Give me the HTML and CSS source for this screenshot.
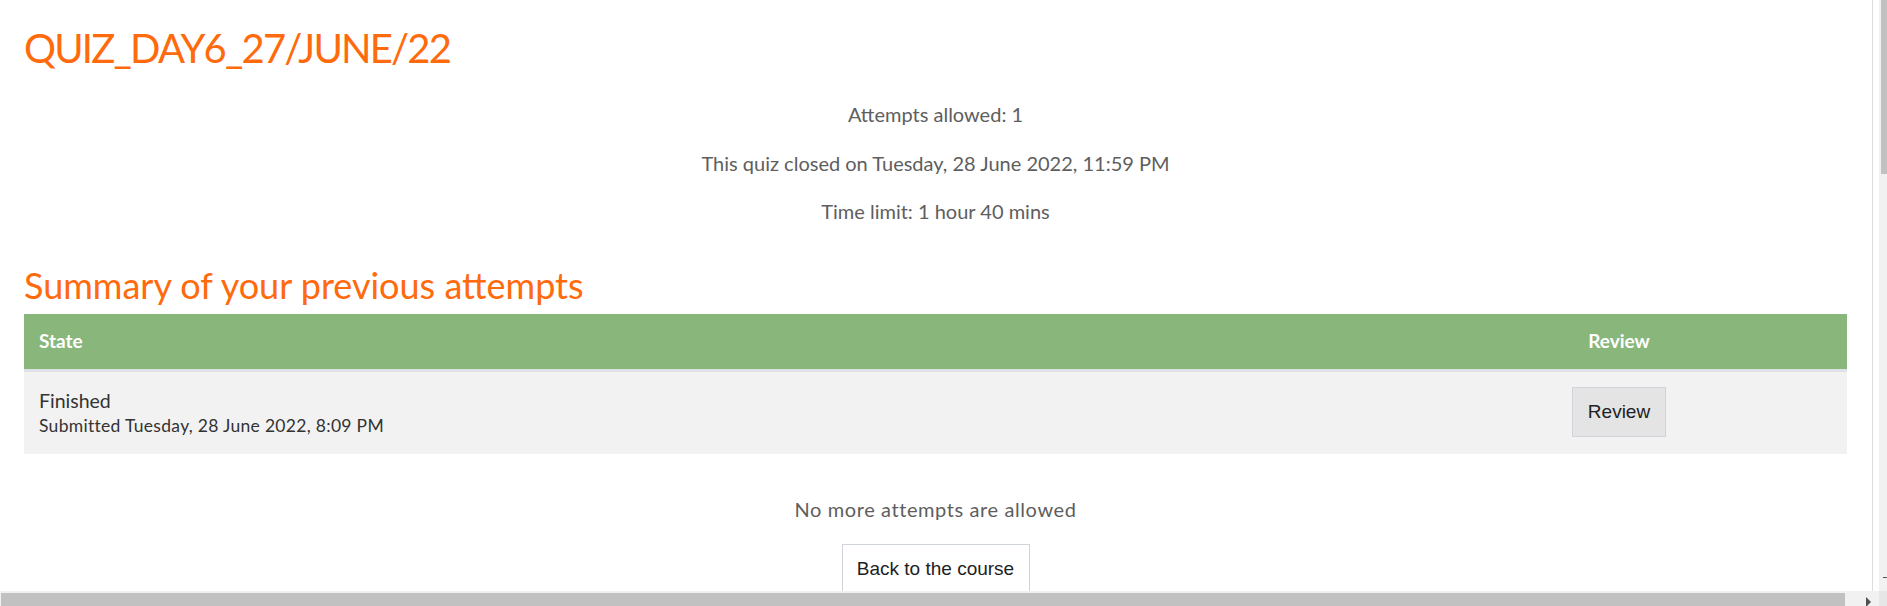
FILE: index.html
```html
<!DOCTYPE html>
<html lang="en">
<head>
<meta charset="utf-8">
<title>QUIZ_DAY6_27/JUNE/22</title>
<link rel="stylesheet" href="styles.css">
</head>
<body>
<div class="page">
  <main class="content">
    <h1 class="quiz-title">QUIZ_DAY6_27/JUNE/22</h1>
    <div class="quizinfo">
      <p>Attempts allowed: 1</p>
      <p>This quiz closed on Tuesday, 28 June 2022, 11:59 PM</p>
      <p>Time limit: 1 hour 40 mins</p>
    </div>
    <h3 class="summary-title">Summary of your previous attempts</h3>
    <div class="attempts">
      <div class="attempts-head">
        <div class="cell cell-state">State</div>
        <div class="cell cell-review">Review</div>
      </div>
      <div class="attempts-row">
        <div class="cell cell-state">
          <div class="state-name">Finished</div>
          <div class="state-date">Submitted Tuesday, 28 June 2022, 8:09 PM</div>
        </div>
        <div class="cell cell-review">
          <button class="btn btn-review" type="button">Review</button>
        </div>
      </div>
    </div>
    <div class="quizattempt">
      <p class="no-more">No more attempts are allowed</p>
      <button class="btn btn-back" type="button">Back to the course</button>
    </div>
  </main>
  <div class="drawer-edge"></div>
</div>
<div class="vscroll"><div class="vthumb"></div><div class="varrow"></div></div>
<div class="hscroll"><div class="hthumb"></div><div class="harrow"></div></div>
<div class="scorner"></div>
</body>
</html>
```

FILE: styles.css
```css
html, body {
  margin: 0;
  padding: 0;
  background: #ffffff;
  overflow: hidden;
  height: 606px;
}

body {
  font-family: "Lato", "Open Sans", sans-serif;
  color: #333333;
}

.page {
  position: relative;
  width: 1887px;
  height: 606px;
}

.content {
  width: 1823px;
  padding: 0 40px 0 24px;
}

.quiz-title {
  margin: 0;
  padding-top: 24px;
  font-size: 40px;
  line-height: 48px;
  font-weight: 400;
  letter-spacing: -1.8px;
  color: #ff6a0c;
}

.quizinfo {
  margin-top: 28px;
  text-align: center;
  color: #5e5e5e;
  font-size: 20px;
}

.quizinfo p {
  margin: 0 0 20.5px;
  line-height: 28px;
}

.quizinfo p:last-child {
  margin-bottom: 0;
}

.summary-title {
  margin: 40px 0 0;
  font-size: 36px;
  line-height: 40px;
  font-weight: 400;
  color: #ff6a0c;
}

.attempts {
  margin-top: 9px;
}

.attempts-head,
.attempts-row {
  display: grid;
  grid-template-columns: 1fr 456px;
}

.attempts-head {
  background: #88b67b;
  color: #ffffff;
  font-weight: 700;
  font-size: 19px;
  line-height: 24px;
  height: 55px;
  border-bottom: 3px solid #dee2e6;
  box-sizing: content-box;
}

.attempts-head .cell {
  padding-top: 15px;
}

.cell-state {
  padding-left: 15px;
}

.cell-review {
  text-align: center;
}

.attempts-row {
  background: #f2f2f2;
  height: 82px;
  align-items: center;
}

.attempts-row .cell-state {
  align-self: start;
  padding-top: 16px;
}

.state-name {
  font-size: 19.5px;
  line-height: 26px;
  color: #333333;
}

.state-date {
  font-size: 17.5px;
  line-height: 24px;
  letter-spacing: 0.3px;
  color: #333333;
}

.btn {
  font-family: "Liberation Sans", Arial, sans-serif;
  font-size: 19px;
  line-height: 22px;
  color: #1d2125;
  cursor: pointer;
}

.btn-review {
  background: #e4e4e4;
  border: 1px solid #ced4da;
  padding: 13px 14px;
  width: 94px;
  height: 50px;
  margin-top: -2px;
}

.quizattempt {
  text-align: center;
  padding-top: 41px;
}

.no-more {
  margin: 0;
  font-size: 20px;
  line-height: 28px;
  letter-spacing: 0.6px;
  color: #5e5e5e;
}

.btn-back {
  margin-top: 21px;
  background: #ffffff;
  border: 1px solid #ced4da;
  padding: 13px 14px;
  width: 188px;
  height: 50px;
}

.drawer-edge {
  position: absolute;
  top: 0;
  left: 1872px;
  width: 1px;
  height: 606px;
  background: #dddddd;
}

.vscroll {
  position: fixed;
  top: 0;
  left: 1879px;
  width: 8px;
  height: 591px;
  background: #f1f1f1;
}

.vthumb {
  margin-left: 2px;
  width: 6px;
  height: 174px;
  background: #c1c1c1;
}

.varrow {
  position: absolute;
  left: 4px;
  top: 577px;
  width: 4px;
  height: 1px;
  background: #505050;
}

.hscroll {
  position: fixed;
  left: 0;
  top: 591px;
  width: 1879px;
  height: 15px;
  background: #f1f1f1;
}

.hthumb {
  margin: 2px 0 0 1px;
  width: 1844px;
  height: 13px;
  background: #c1c1c1;
}

.harrow {
  position: absolute;
  left: 1866px;
  top: 6px;
  width: 0;
  height: 0;
  border-top: 5px solid transparent;
  border-bottom: 5px solid transparent;
  border-left: 5px solid #505050;
}

.scorner {
  position: fixed;
  left: 1879px;
  top: 591px;
  width: 8px;
  height: 15px;
  background: #e6e6e6;
}
```
